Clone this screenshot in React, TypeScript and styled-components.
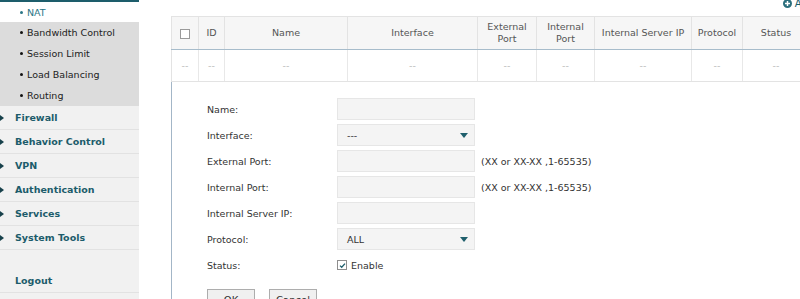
import styled, { createGlobalStyle } from 'styled-components';

const GlobalStyle = createGlobalStyle`
  html, body {
    margin: 0;
    padding: 0;
    overflow: hidden;
    background: #fff;
  }
  body {
    font-family: 'DejaVu Sans', Verdana, sans-serif;
    font-size: 9.5px;
    color: #333;
  }
`;

const subItems = ['Bandwidth Control', 'Session Limit', 'Load Balancing', 'Routing'];
const menuItems = ['Firewall', 'Behavior Control', 'VPN', 'Authentication', 'Services', 'System Tools'];

const columns = [
  { key: 'check', label: '', width: 26 },
  { key: 'id', label: 'ID', width: 25 },
  { key: 'name', label: 'Name', width: 122 },
  { key: 'iface', label: 'Interface', width: 129 },
  { key: 'ext', label: 'External\nPort', width: 58 },
  { key: 'int', label: 'Internal\nPort', width: 57 },
  { key: 'ip', label: 'Internal Server IP', width: 96 },
  { key: 'proto', label: 'Protocol', width: 50 },
  { key: 'status', label: 'Status', width: 66 },
];

const PORT_HINT = '(XX or XX-XX ,1-65535)';

const App = () => {
  return (
    <Page>
      <GlobalStyle />
      <Sidebar>
        <SubItem active>
          <Bullet active />
          NAT
        </SubItem>
        <SubGroup>
          {subItems.map((s) => (
            <SubItem key={s}>
              <Bullet />
              {s}
            </SubItem>
          ))}
        </SubGroup>
        {menuItems.map((m) => (
          <MenuItem key={m}>
            <Arrow />
            {m}
          </MenuItem>
        ))}
        <Spacer />
        <MenuItem>Logout</MenuItem>
      </Sidebar>

      <Main>
        <Toolbar>
          <AddButton>
            <svg width='9' height='9' viewBox='0 0 10 10'>
              <circle cx='5' cy='5' r='5' fill='#2a6e7c' />
              <path d='M5 2.2v5.6M2.2 5h5.6' stroke='#fff' strokeWidth='1.6' />
            </svg>
            Add
          </AddButton>
        </Toolbar>

        <Table>
          <thead>
            <tr>
              {columns.map((c) => (
                <HeadCell key={c.key} width={c.width}>
                  {c.key === 'check' ? <BoxCheck /> : c.label}
                </HeadCell>
              ))}
            </tr>
          </thead>
          <tbody>
            <tr>
              {columns.map((c) => (
                <Cell key={c.key}>--</Cell>
              ))}
            </tr>
          </tbody>
        </Table>

        <Form>
          <Row>
            <Label>Name:</Label>
            <Input />
          </Row>
          <Row>
            <Label>Interface:</Label>
            <Select>
              ---
              <Caret />
            </Select>
          </Row>
          <Row>
            <Label>External Port:</Label>
            <Input />
            <Hint>{PORT_HINT}</Hint>
          </Row>
          <Row>
            <Label>Internal Port:</Label>
            <Input />
            <Hint>{PORT_HINT}</Hint>
          </Row>
          <Row>
            <Label>Internal Server IP:</Label>
            <Input />
          </Row>
          <Row>
            <Label>Protocol:</Label>
            <Select>
              ALL
              <Caret />
            </Select>
          </Row>
          <Row>
            <Label>Status:</Label>
            <CheckLabel>
              <CheckBox>
                <svg width='7' height='7' viewBox='0 0 7 7'>
                  <path d='M1 3.6l1.7 1.7L6 1.6' stroke='#1f5f6c' strokeWidth='1.3' fill='none' />
                </svg>
              </CheckBox>
              Enable
            </CheckLabel>
          </Row>
          <Buttons>
            <Button>OK</Button>
            <Button>Cancel</Button>
          </Buttons>
        </Form>
      </Main>
    </Page>
  );
};

const Page = styled.div`
  display: flex;
  width: 800px;
  height: 299px;
  overflow: hidden;
`;

const Sidebar = styled.div`
  width: 139px;
  flex-shrink: 0;
  display: flex;
  flex-direction: column;
  border-top: 2px solid #1d5d6b;
  background: #f1f1f1;
`;

const SubGroup = styled.div`
  flex-shrink: 0;
  background: #dcdcdc;
`;

const SubItem = styled.div<{ active?: boolean }>`
  flex-shrink: 0;
  display: flex;
  align-items: center;
  height: ${(p) => (p.active ? '20px' : '21px')};
  padding-left: 20px;
  background: ${(p) => (p.active ? '#fff' : 'transparent')};
  color: ${(p) => (p.active ? '#2a7686' : '#222')};
`;

const Bullet = styled.span<{ active?: boolean }>`
  width: 3px;
  height: 3px;
  border-radius: 50%;
  margin-right: 4px;
  background: ${(p) => (p.active ? '#2a7686' : '#111')};
`;

const MenuItem = styled.div`
  flex-shrink: 0;
  position: relative;
  display: flex;
  align-items: center;
  height: 23px;
  padding-left: 15px;
  font-weight: bold;
  color: #1c5c6b;
  border-bottom: 1px solid #e2e2e2;
`;

const Arrow = styled.span`
  position: absolute;
  left: 0;
  top: 9px;
  width: 0;
  height: 0;
  border-top: 3px solid transparent;
  border-bottom: 3px solid transparent;
  border-left: 4px solid #17414b;
`;

const Spacer = styled.div`
  flex-shrink: 0;
  height: 19px;
`;

const Main = styled.div`
  flex: 1;
  padding-left: 32px;
  display: flex;
  flex-direction: column;
  min-width: 0;
`;

const Toolbar = styled.div`
  flex-shrink: 0;
  height: 16px;
  display: flex;
  justify-content: flex-end;
  align-items: flex-start;
`;

const AddButton = styled.div`
  display: flex;
  align-items: center;
  gap: 3px;
  margin-top: -2px;
  margin-right: -14px;
  color: #1c5c6b;
  font-size: 10px;
  white-space: nowrap;
`;

const Table = styled.table`
  flex-shrink: 0;
  border-collapse: collapse;
  table-layout: fixed;
  width: 629px;
  border-top: 1px solid #e3e3e3;
  border-left: 1px solid #e3e3e3;
`;

const HeadCell = styled.th<{ width: number }>`
  width: ${(p) => p.width}px;
  height: 32px;
  padding: 0;
  background: #f6f6f6;
  border-right: 1px solid #e3e3e3;
  border-bottom: 1px solid #a7bccb;
  color: #555;
  font-weight: normal;
  line-height: 12px;
  white-space: pre-line;
  text-align: center;
`;

const Cell = styled.td`
  height: 31px;
  padding: 0;
  text-align: center;
  color: #bbb;
  border-right: 1px solid #e8e8e8;
  border-bottom: 1px solid #e3e3e3;
`;

const BoxCheck = styled.span`
  display: inline-block;
  width: 8px;
  height: 8px;
  vertical-align: middle;
  border: 1px solid #9a9a9a;
  background: #fff;
`;

const Form = styled.div`
  flex: 1 0 auto;
  border-left: 1px solid #a3b6c7;
  padding: 16px 0 0 35px;
  display: flex;
  flex-direction: column;
  gap: 4px;
`;

const Row = styled.div`
  display: flex;
  align-items: center;
  height: 22px;
`;

const Label = styled.div`
  width: 130px;
  color: #333;
`;

const Input = styled.div`
  width: 136px;
  height: 20px;
  background: #f4f4f4;
  border: 1px solid #e6e6e6;
`;

const Select = styled(Input)`
  display: flex;
  align-items: center;
  justify-content: space-between;
  padding: 0 6px 0 9px;
  width: 121px;
  color: #333;
`;

const Caret = styled.span`
  width: 0;
  height: 0;
  border-left: 4px solid transparent;
  border-right: 4px solid transparent;
  border-top: 5px solid #1f5f6c;
`;

const Hint = styled.span`
  margin-left: 6px;
  color: #333;
`;

const CheckLabel = styled.label`
  display: flex;
  align-items: center;
  gap: 4px;
  color: #333;
`;

const CheckBox = styled.span`
  display: flex;
  align-items: center;
  justify-content: center;
  width: 8px;
  height: 8px;
  border: 1px solid #8e8e8e;
  background: #fff;
`;

const Buttons = styled.div`
  display: flex;
  gap: 14px;
  margin-top: 9px;
`;

const Button = styled.button`
  width: 48px;
  height: 22px;
  padding: 0;
  font-family: inherit;
  font-size: 10px;
  color: #333;
  background: #f0f0f0;
  border: 1px solid #adadad;
`;

export default App;
